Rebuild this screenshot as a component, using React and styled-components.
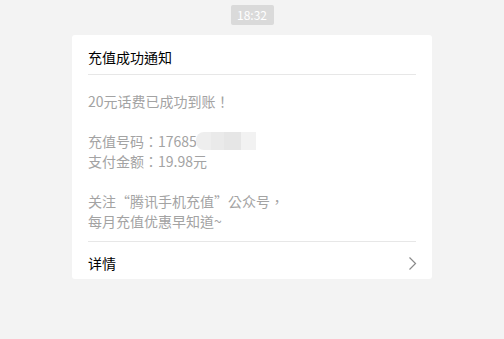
import React from "react";
import styled, { createGlobalStyle } from "styled-components";

const Global = createGlobalStyle`
  html, body { margin: 0; padding: 0; background: #f3f3f3; }
  body { font-family: "Noto Sans CJK TC", "Noto Sans CJK SC", "Noto Sans", sans-serif; }
`;

const Page = styled.div`
  width: 504px;
  height: 339px;
  background: #f3f3f3;
  display: flex;
  flex-direction: column;
  align-items: center;
  padding-top: 5px;
  box-sizing: border-box;
`;

const TimeBadge = styled.div`
  height: 20px;
  padding: 0 6px;
  width: 43px;
  box-sizing: border-box;
  border-radius: 2px;
  background: #dadada;
  color: #fff;
  font-size: 12px;
  line-height: 20px;
  text-align: center;
`;

const Card = styled.div`
  margin-top: 10px;
  width: 360px;
  background: #fff;
  border-radius: 3px;
  padding: 0 16px;
  box-sizing: border-box;
`;

const Header = styled.div`
  padding: 12px 0 7px;
  font-size: 14px;
  line-height: 20px;
  color: #000;
  border-bottom: 1px solid #e7e7e7;
`;

const Body = styled.div`
  padding: 16px 0 10px;
  font-size: 14px;
  line-height: 20px;
  color: #a3a3a3;
`;

const Line = styled.div`
  height: 20px;
  white-space: nowrap;
  display: flex;
  align-items: center;
`;

const Mask = styled.span`
  display: inline-flex;
  height: 18px;
  margin-left: -1px;
  filter: blur(0.6px);
`;

const MaskBlock = styled.span`
  display: inline-block;
  width: ${p => p.$w}px;
  height: 100%;
  background: ${p => p.$c};
  border-radius: ${p => p.$r || "0"};
`;

const Footer = styled.div`
  border-top: 1px solid #e7e7e7;
  padding: 11px 0 6px;
  display: flex;
  align-items: center;
  justify-content: space-between;
  font-size: 14px;
  line-height: 20px;
  color: #000;
`;

const Chevron = () => (
  <svg width="9" height="15" viewBox="0 0 9 15" style={{ marginRight: "-1px" }}>
    <polyline points="1.5,1.5 7.5,7.5 1.5,13.5" fill="none" stroke="#8a8a8a" strokeWidth="1.2" />
  </svg>
);

export default function App() {
  return (
    <Page>
      <Global />
      <TimeBadge>18:32</TimeBadge>
      <Card>
        <Header>充值成功通知</Header>
        <Body>
          <Line>20元话费已成功到账！</Line>
          <Line />
          <Line>
            充值号码：17685
            <Mask>
              <MaskBlock $w={15} $c="#eeeeee" $r="8px 0 0 8px" />
              <MaskBlock $w={13} $c="#eaeaea" />
              <MaskBlock $w={17} $c="#e6e6e6" />
              <MaskBlock $w={15} $c="#f2f2f2" />
            </Mask>
          </Line>
          <Line>支付金额：19.98元</Line>
          <Line />
          <Line>关注“腾讯手机充值”公众号，</Line>
          <Line>每月充值优惠早知道~</Line>
        </Body>
        <Footer>
          <span>详情</span>
          <Chevron />
        </Footer>
      </Card>
    </Page>
  );
}
